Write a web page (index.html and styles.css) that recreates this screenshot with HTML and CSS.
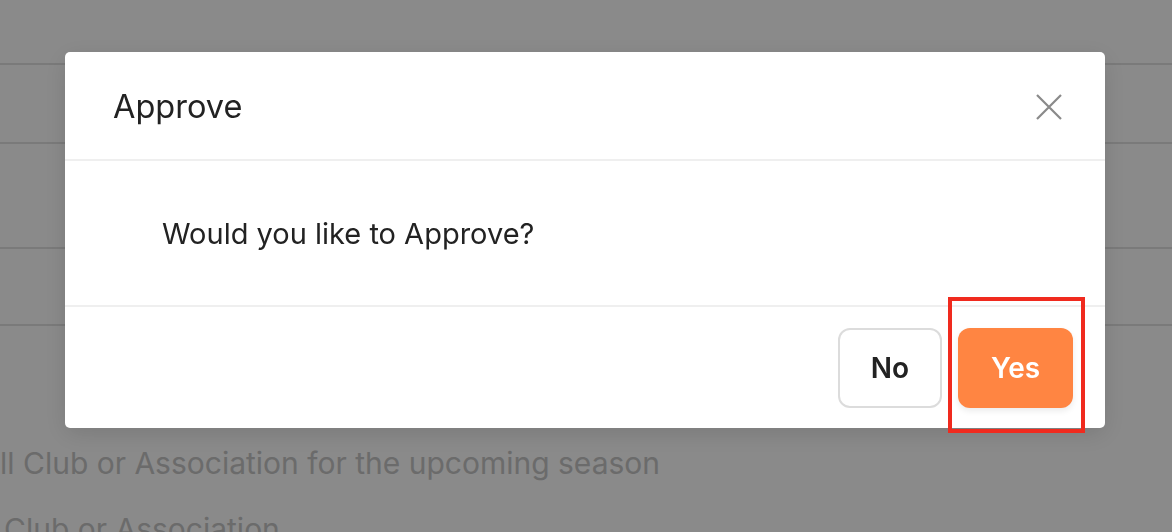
FILE: index.html
```html
<!DOCTYPE html>
<html lang="en">
<head>
  <meta charset="UTF-8" />
  <meta name="viewport" content="width=device-width, initial-scale=1.0"/>
  <title>Approve</title>
  <link rel="stylesheet" href="styles.css">
</head>
<body>
  <div class="page">
    <div class="row row-top"></div>
    <div class="row row-a"></div>
    <div class="row row-b"></div>
    <div class="row row-c"></div>
    <div class="notes">
      <p>ll Club or Association for the upcoming season</p>
      <p class="second">Club or Association</p>
    </div>
  </div>

  <!-- Confirm modal -->
  <div class="overlay">
    <div class="modal">
      <div class="modal-header">
        <h2>Approve</h2>
        <button class="close" title="Close">
          <svg width="26" height="26" viewBox="0 0 26 26">
            <path d="M1 1 L25 25 M25 1 L1 25" stroke="#8a8a8a" stroke-width="2.2" fill="none"/>
          </svg>
        </button>
      </div>
      <div class="modal-body">
        Would you like to Approve?
      </div>
      <div class="modal-footer">
        <button class="btn btn-no">No</button>
        <div class="yes-wrap">
          <button class="btn btn-yes">Yes</button>
          <span class="highlight"></span>
        </div>
      </div>
    </div>
  </div>
</body>
</html>
```

FILE: styles.css
```css
:root {
  --text: #222;
  --muted: #8a8a8a;
  --line: #efefef;
  --orange: #ff8542;
  --red: #f02a1e;
}
body {
  margin: 0;
  font-family: Inter, 'Noto Sans', sans-serif;
  background: #fff;
  overflow: hidden;
  height: 532px;
}
.page {
  color: #c6c6c6;
}
.row {
  border-bottom: 2px solid #e2e2e2;
}
.row-top { height: 63px; }
.row-a { height: 77px; }
.row-b { height: 103px; }
.row-c { height: 75px; }
.notes {
  padding-top: 119px;
  font-size: 30px;
}
.notes p {
  margin: 0 0 30px 0;
  line-height: 36px;
}
.notes .second {
  padding-left: 4px;
}
.overlay {
  position: fixed;
  inset: 0;
  background: rgba(0, 0, 0, 0.46);
  display: flex;
  justify-content: flex-start;
  align-items: flex-start;
  padding: 52px 0 0 65px;
}
.modal {
  width: 1040px;
  background: #fff;
  border-radius: 5px;
  box-shadow: 0 6px 24px rgba(0, 0, 0, 0.12);
}
.modal-header {
  height: 107px;
  display: flex;
  align-items: center;
  justify-content: space-between;
  padding: 0 43px 0 48px;
  border-bottom: 2px solid var(--line);
}
.modal-header h2 {
  margin: 0;
  font-size: 32.5px;
  font-weight: 400;
  color: var(--text);
  line-height: 40px;
  padding-top: 3px;
}
.close {
  background: none;
  border: none;
  padding: 3px 0 0 0;
  display: flex;
  cursor: pointer;
}
.modal-body {
  height: 144px;
  display: flex;
  align-items: center;
  padding-left: 97px;
  font-size: 29px;
  color: var(--text);
  border-bottom: 2px solid var(--line);
}
.modal-footer {
  height: 121px;
  display: flex;
  align-items: center;
  justify-content: flex-end;
  gap: 16px;
  padding-right: 32px;
}
.btn {
  height: 80px;
  border-radius: 12px;
  font-family: Inter, 'Noto Sans', sans-serif;
  font-size: 28px;
  font-weight: 600;
  cursor: pointer;
}
.btn-no {
  width: 104px;
  background: #fff;
  color: var(--text);
  border: 2px solid #dcdcdc;
}
.btn-yes {
  width: 115px;
  background: var(--orange);
  color: #fff;
  border: none;
  box-shadow: 0 3px 6px rgba(0, 0, 0, 0.08);
}
.yes-wrap {
  position: relative;
  display: flex;
}
.highlight {
  position: absolute;
  top: -31px;
  right: -12px;
  bottom: -25px;
  left: -10px;
  border: 4px solid var(--red);
  pointer-events: none;
}
```
